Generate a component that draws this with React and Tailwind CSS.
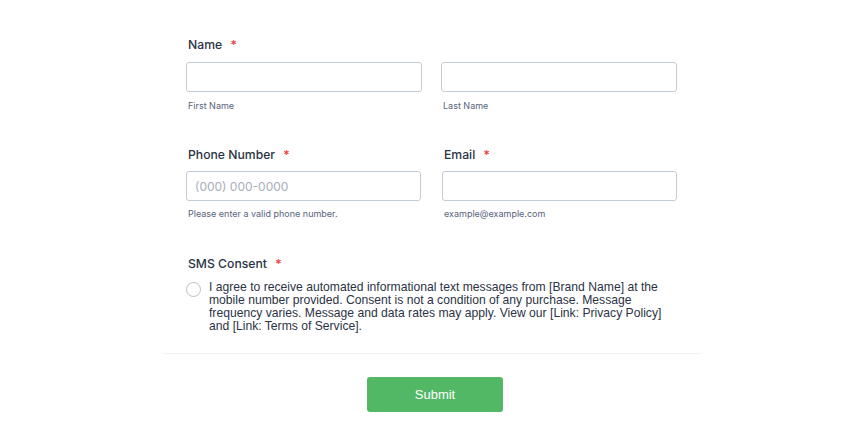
export default function App() {
  const label = "block pl-[2px] text-[12.2px] leading-4 font-medium text-[#2c3345]";
  const star = "ml-[5px] text-[#f23a3c]";
  const input =
    "block w-full h-[30px] rounded-[3px] border border-[#c3cad8] bg-white px-[8px] text-[12px] text-[#2c3345] placeholder-[#a7aebb] outline-none";
  const sub = "block pl-[2px] text-[9px] leading-3 text-[#57647e]";

  return (
    <div className="w-[850px] h-[428px] bg-white font-['Inter',sans-serif] overflow-hidden">
      <div className="ml-[163px] w-[538px] pt-[37px]">
        <div className="px-[23px] w-[538px]">
          {/* Name */}
          <span className={label}>
            Name <span className={star}>*</span>
          </span>
          <div className="grid grid-cols-2 gap-x-[19px] mt-[9px] w-[491px]">
            <div>
              <input className={input} />
              <span className={sub + " mt-[8px]"}>First Name</span>
            </div>
            <div>
              <input className={input} />
              <span className={sub + " mt-[8px]"}>Last Name</span>
            </div>
          </div>

          {/* Phone + Email */}
          <div className="grid grid-cols-2 gap-x-[21px] mt-[35px] w-[491px]">
            <div>
              <span className={label}>
                Phone Number <span className={star}>*</span>
              </span>
              <input className={input + " mt-[8px]"} placeholder="(000) 000-0000" />
              <span className={sub + " mt-[7px]"}>Please enter a valid phone number.</span>
            </div>
            <div>
              <span className={label}>
                Email <span className={star}>*</span>
              </span>
              <input className={input + " mt-[8px]"} />
              <span className={sub + " mt-[7px]"}>example@example.com</span>
            </div>
          </div>

          {/* SMS consent */}
          <span className={label + " mt-[36px]"}>
            SMS Consent <span className={star}>*</span>
          </span>
          <div className="flex items-start gap-[8px] mt-[9px]">
            <span className="mt-[1px] w-[15px] h-[15px] shrink-0 rounded-full border border-[#b8bfcc] bg-white" />
            <p className="w-[465px] font-['Liberation_Sans',Arial,sans-serif] text-[12.15px] leading-[13px] text-[#2c3345]">
              I agree to receive automated informational text messages from [Brand Name] at the
              mobile number provided. Consent is not a condition of any purchase. Message
              frequency varies. Message and data rates may apply. View our [Link: Privacy Policy]
              and [Link: Terms of Service].
            </p>
          </div>
        </div>

        <div className="mt-[20px] h-px bg-[#f0f1f4]" />

        <div className="flex justify-center pt-[23px] pl-[6px]">
          <button className="w-[136px] h-[35px] rounded-[3px] bg-[#52b865] text-white font-['Liberation_Sans',Arial,sans-serif] text-[13px]">
            Submit
          </button>
        </div>
      </div>
    </div>
  );
}
